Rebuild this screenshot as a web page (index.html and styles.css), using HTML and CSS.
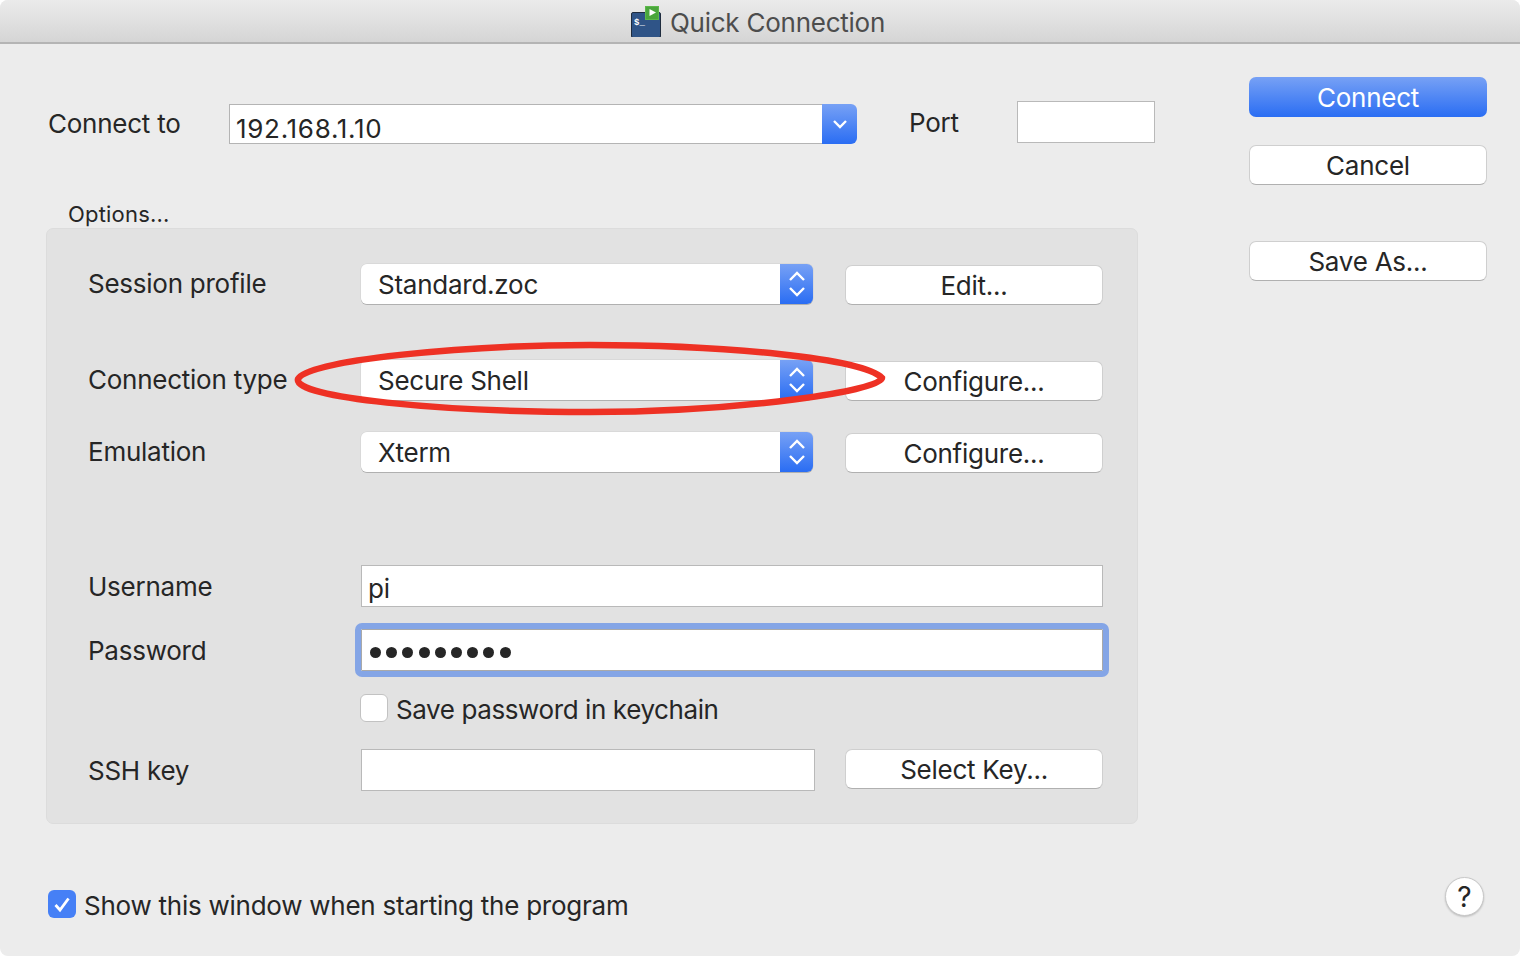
FILE: index.html
```html
<!DOCTYPE html>
<html lang="en">
<head>
    <meta charset="UTF-8">
    <title>Quick Connection</title>
    <link rel="stylesheet" href="styles.css">
</head>
<body>

<div class="window">
    <div class="titlebar">
        <svg class="app-icon" width="32" height="32" viewBox="0 0 32 32">
            <rect x="1.5" y="7.5" width="29" height="25" rx="1.5" fill="#2f5487" stroke="#1f2c3e"/>
            <text x="4" y="20" class="app-icon-text">$_</text>
            <rect x="15.5" y="1.5" width="13" height="13" fill="#4aa63c" stroke="#5cb84a"/>
            <path d="M19.5 4 L26 7.5 L19.5 11 Z" fill="#fff"/>
        </svg>
        <span class="title">Quick Connection</span>
    </div>

    <div class="content">
        <div class="left">
            <div class="connect-row">
                <label class="connect-label">Connect to</label>
                <div class="combo">
                    <div class="combo-value">192.168.1.10</div>
                    <div class="combo-arrow">
                        <svg width="16" height="10" viewBox="0 0 16 10"><path d="M2 2 L8 8 L14 2" fill="none" stroke="#fff" stroke-width="2.4"/></svg>
                    </div>
                </div>
                <label class="port-label">Port</label>
                <input class="field port-field" type="text">
            </div>

            <div class="options-title">Options...</div>
            <div class="panel">
                <div class="row row-session">
                    <label class="row-label">Session profile</label>
                    <div class="select">
                        <div class="select-value">Standard.zoc</div>
                        <div class="select-arrows">
                            <svg width="18" height="28" viewBox="0 0 18 28"><path d="M2 10 L9 3 L16 10 M2 18 L9 25 L16 18" fill="none" stroke="#fff" stroke-width="2.4"/></svg>
                        </div>
                    </div>
                    <button class="btn">Edit...</button>
                </div>
                <div class="row row-conn">
                    <label class="row-label">Connection type</label>
                    <div class="select">
                        <div class="select-value">Secure Shell</div>
                        <div class="select-arrows">
                            <svg width="18" height="28" viewBox="0 0 18 28"><path d="M2 10 L9 3 L16 10 M2 18 L9 25 L16 18" fill="none" stroke="#fff" stroke-width="2.4"/></svg>
                        </div>
                    </div>
                    <button class="btn">Configure...</button>
                </div>
                <div class="row row-emu">
                    <label class="row-label">Emulation</label>
                    <div class="select">
                        <div class="select-value">Xterm</div>
                        <div class="select-arrows">
                            <svg width="18" height="28" viewBox="0 0 18 28"><path d="M2 10 L9 3 L16 10 M2 18 L9 25 L16 18" fill="none" stroke="#fff" stroke-width="2.4"/></svg>
                        </div>
                    </div>
                    <button class="btn">Configure...</button>
                </div>
                <div class="row row-user">
                    <label class="row-label label-low">Username</label>
                    <div class="field wide-field">pi</div>
                </div>
                <div class="row row-pass">
                    <label class="row-label label-low">Password</label>
                    <div class="field wide-field focused"><span class="dots"><i></i><i></i><i></i><i></i><i></i><i></i><i></i><i></i><i></i></span></div>
                </div>
                <div class="row row-save">
                    <span class="check"></span>
                    <label class="check-label">Save password in keychain</label>
                </div>
                <div class="row row-ssh">
                    <label class="row-label label-low">SSH key</label>
                    <div class="field ssh-field"></div>
                    <button class="btn btn-ssh">Select Key...</button>
                </div>
            </div>

            <div class="show-row">
                <span class="check checked">
                    <svg width="20" height="20" viewBox="0 0 20 20"><path d="M3.5 11 L8 16 L16.5 4.5" fill="none" stroke="#fff" stroke-width="2.8"/></svg>
                </span>
                <label class="show-label">Show this window when starting the program</label>
            </div>
        </div>

        <div class="right">
            <button class="btn btn-primary">Connect</button>
            <button class="btn btn-cancel">Cancel</button>
            <button class="btn btn-save">Save As...</button>
            <button class="help">?</button>
        </div>
    </div>

    <svg class="annotation" width="600" height="80" viewBox="0 0 600 80">
        <path d="M5 39 C 15 20, 170 5, 297 5 C 430 5, 570 18, 589 38 C 590 50, 450 72, 297 72 C 150 72, 0 58, 5 39 Z" fill="none" stroke="#ee3124" stroke-width="6.5"/>
    </svg>
</div>

</body>
</html>
```

FILE: styles.css
```css
* {
    box-sizing: border-box;
}
html, body {
    margin: 0;
    padding: 0;
    background-color: #fff;
}
body {
    font-family: Inter, "Liberation Sans", sans-serif;
    font-size: 26px;
    letter-spacing: -0.25px;
    color: #262626;
}
.window {
    position: relative;
    width: 1520px;
    height: 956px;
    background-color: #ececec;
    border-radius: 8px;
    overflow: hidden;
}
.titlebar {
    height: 44px;
    display: flex;
    align-items: center;
    justify-content: center;
    background: linear-gradient(#ebebeb, #d5d5d5);
    border-bottom: 2px solid #b4b4b4;
    padding: 2px 4px 0 0;
}
.app-icon {
    margin-right: 8px;
    margin-left: -1px;
    margin-top: -3px;
}
.app-icon-text {
    font-family: "Liberation Mono", monospace;
    font-size: 9px;
    font-weight: bold;
    letter-spacing: 0;
    fill: #fff;
}
.title {
    color: #4d4d4d;
}
.content {
    display: flex;
}
.left {
    width: 1203px;
    padding-left: 46px;
}

/* top row */
.connect-row {
    display: flex;
    align-items: center;
    margin-top: 57px;
    height: 42px;
}
.connect-label {
    width: 183px;
    padding-left: 2px;
    margin-top: 2px;
}
.combo {
    display: flex;
    width: 628px;
    height: 40px;
    margin-top: 4px;
}
.combo-value {
    flex: 1;
    background-color: #fff;
    border: 1px solid #b4b4b4;
    border-right: none;
    padding: 6px 6px 0;
    line-height: 36px;
    letter-spacing: 0.7px;
}
.combo-arrow {
    width: 35px;
    display: flex;
    align-items: center;
    justify-content: center;
    background: linear-gradient(#77a1f5, #2a6df3);
    border-radius: 0 6px 6px 0;
}
.port-label {
    width: 108px;
    margin-left: 52px;
    margin-top: 0;
}
.field {
    background-color: #fff;
    border: 1px solid #b9b9b9;
    height: 42px;
    font-size: 26px;
    padding: 0 6px;
}
.port-field {
    width: 138px;
}

/* options panel */
.options-title {
    font-size: 22px;
    letter-spacing: 0.2px;
    margin-top: 58px;
    margin-left: 22px;
    height: 27px;
    line-height: 27px;
}
.panel {
    width: 1092px;
    height: 596px;
    margin-top: 0;
    padding-left: 41px;
    background-color: #e2e2e2;
    border: 1px solid #dcdcdc;
    border-radius: 7px;
}
.row {
    display: flex;
    align-items: center;
}
.row-label {
    width: 273px;
    margin-top: -2px;
}
.label-low {
    margin-top: 0;
}
.select {
    display: flex;
    width: 452px;
    height: 40px;
    margin-right: 32px;
    border-radius: 6px;
    box-shadow: 0 1px 0 #b0b0b0, 0 0 0 0.5px #cfcfcf;
}
.select-value {
    flex: 1;
    background-color: #fff;
    border-radius: 6px 0 0 6px;
    padding-left: 17px;
    line-height: 41px;
}
.select-arrows {
    width: 33px;
    display: flex;
    align-items: center;
    justify-content: center;
    background: linear-gradient(#77a1f5, #2a6df3);
    border-radius: 0 6px 6px 0;
}
.btn {
    display: block;
    width: 258px;
    height: 40px;
    margin-top: 2px;
    padding: 0;
    font: inherit;
    letter-spacing: inherit;
    color: #262626;
    background-color: #fff;
    border: 1px solid #cfcfcf;
    border-bottom-color: #b0b0b0;
    border-radius: 7px;
}
.row-session {
    margin-top: 34px;
}
.row-conn {
    margin-top: 54px;
}
.row-emu {
    margin-top: 30px;
}
.row-user {
    margin-top: 92px;
}
.row-pass {
    margin-top: 22px;
}
.wide-field {
    width: 742px;
    line-height: 46px;
}
.focused {
    border-color: #a9a9a9;
    outline: 6px solid #84a5e6;
    outline-offset: 0;
    border-radius: 1px;
}
.dots {
    display: flex;
    gap: 5.2px;
    padding: 17px 3px 0 2px;
}
.dots i {
    width: 11px;
    height: 11px;
    border-radius: 50%;
    background-color: #262626;
}
.row-save {
    margin-top: 21px;
    padding-left: 272px;
}
.check {
    display: flex;
    align-items: center;
    justify-content: center;
    width: 28px;
    height: 28px;
    margin-top: -2px;
    background-color: #fff;
    border: 1px solid #c2c2c2;
    border-radius: 6px;
}
.check-label {
    margin-left: 8px;
    margin-top: 2px;
    letter-spacing: -0.4px;
}
.row-ssh {
    margin-top: 24px;
}
.ssh-field {
    width: 454px;
    margin-right: 30px;
}
.btn-ssh {
    margin-top: -2px;
}

/* bottom row */
.show-row {
    display: flex;
    align-items: center;
    margin: 66px 0 0 2px;
}
.checked {
    background-color: #4680f6;
    border: none;
    margin-top: -4px;
}
.show-label {
    margin-left: 8px;
}

/* right column */
.right {
    position: relative;
    width: 238px;
    height: 900px;
    margin-left: 46px;
}
.right .btn {
    width: 238px;
}
.btn-primary.btn {
    margin-top: 33px;
    color: #fff;
    background: linear-gradient(#77a1f5, #2a6df3);
    border: none;
}
.btn-cancel {
    margin-top: 28px;
}
.btn-save {
    margin-top: 56px;
}
.help {
    position: absolute;
    left: 196px;
    top: 833px;
    width: 39px;
    height: 39px;
    padding: 0;
    font: inherit;
    font-size: 28px;
    color: #262626;
    background-color: #fff;
    border: 1px solid #c8c8c8;
    border-radius: 50%;
    box-shadow: 0 1px 2px rgba(0, 0, 0, 0.2);
}

/* red marker drawn over the screenshot */
.annotation {
    position: absolute;
    left: 293px;
    top: 340px;
}
```
